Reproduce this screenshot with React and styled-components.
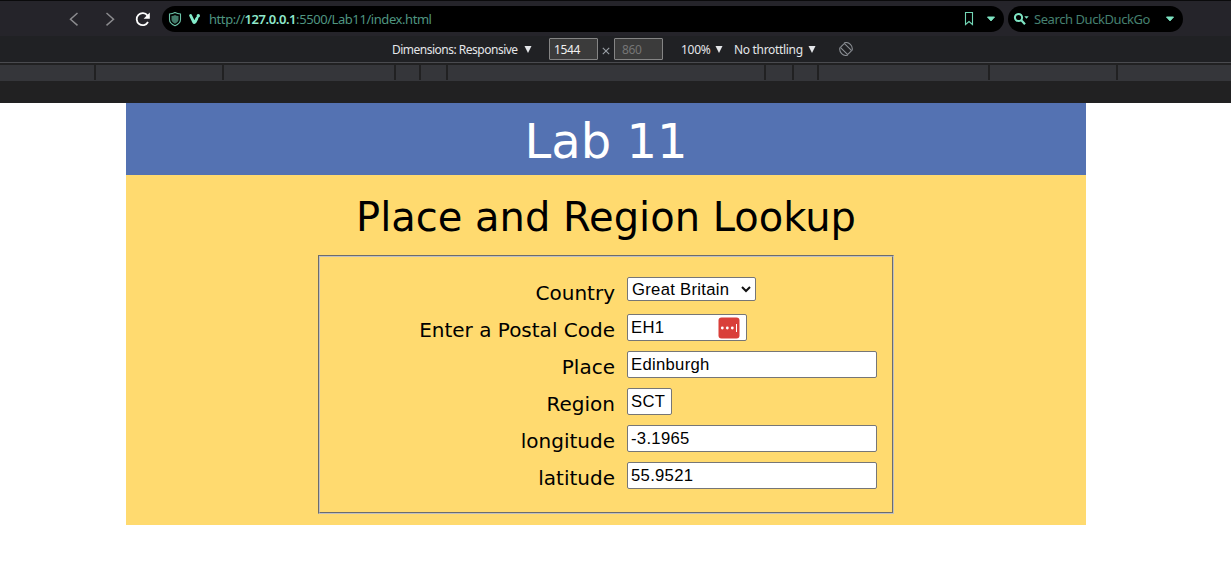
import React from "react";
import styled, { createGlobalStyle } from "styled-components";

const Global = createGlobalStyle`
  *, *::before, *::after { box-sizing: border-box; }
  body { margin: 0; background: #fff; }
  svg { flex-shrink: 0; }
`;

const Page = styled.div`
  width: 1231px;
  height: 587px;
  overflow: hidden;
  background: #fff;
`;

/* ---------- browser chrome ---------- */
const NavBar = styled.div`
  height: 36px;
  padding: 5px 0 4px 65px;
  border-top: 1px solid #0a0a0b;
  background: #25242a;
  display: flex;
  align-items: center;
  font-family: "Noto Sans", sans-serif;
  font-size: 13px;
  color: #4f9580;
`;
const NavIcons = styled.div`
  width: 97px;
  display: flex;
`;
const UrlField = styled.div`
  width: 842px;
  height: 26px;
  border-radius: 13px;
  background: #000;
  display: flex;
  align-items: center;
  padding: 0 8px 0 6px;
`;
const Url = styled.span`
  flex: 1;
  margin-left: 7px;
  line-height: 26px;
  white-space: nowrap;
  letter-spacing: -0.43px;
  b { font-weight: 600; color: #8fe8cb; }
`;
const SearchField = styled(UrlField)`
  width: 175px;
  margin-left: 4px;
  padding: 0 8px 0 5px;
`;
const SearchHint = styled(Url)`
  margin-left: 4px;
  color: #468170;
`;

const DeviceBar = styled.div`
  height: 27px;
  background: #202124;
  border-bottom: 1px solid #4a4b4f;
  display: flex;
  align-items: center;
  padding-left: 392px;
  font-family: "Noto Sans", sans-serif;
  font-size: 12px;
  color: #e4e6e9;
`;
const Choice = styled.span`
  width: ${(p) => p.$w}px;
  margin-left: ${(p) => p.$before || 0}px;
  margin-right: ${(p) => p.$gap}px;
  display: flex;
  align-items: center;
  justify-content: space-between;
  white-space: nowrap;
  letter-spacing: ${(p) => p.$track || "0"};
`;
const SizeBox = styled.span`
  width: 49px;
  height: 22px;
  border: 1px solid #858585;
  border-radius: 1px;
  background: #3b3b3b;
  line-height: 21px;
  letter-spacing: -0.4px;
  padding-left: ${(p) => (p.$muted ? 7 : 4)}px;
  color: ${(p) => (p.$muted ? "#757575" : "#f1f1f1")};
`;
const Times = styled.span`
  width: 16px;
  display: flex;
  justify-content: center;
  padding-top: 4px;
`;

const Ruler = styled.div`
  height: 40px;
  padding: 2px 0 22px;
  background: #212122;
`;
const RulerTrack = styled.div`
  height: 16px;
  display: flex;
  gap: 2px;
  border-bottom: 1px solid #35363a;
`;
const Segment = styled.div`
  flex: ${(p) => (p.$w ? `0 0 ${p.$w}px` : "1")};
  background: #35363a;
`;

/* ---------- page content ---------- */
const Content = styled.main`
  width: 960px;
  margin-left: 126px;
  font-family: Verdana, "DejaVu Sans", sans-serif;
  color: #000;
`;
const Banner = styled.header`
  height: 72px;
  background: #5472b2;
  color: #fff;
  text-align: center;
  font-size: 48px;
  line-height: 72px;
  padding-top: 2px;
`;
const Body = styled.section`
  height: 350px;
  background: #ffda6f;
  padding-top: 12px;
`;
const Title = styled.h1`
  margin: 0 0 8px;
  font-size: 40px;
  font-weight: 400;
  line-height: 60px;
  text-align: center;
  white-space: nowrap;
`;
const Form = styled.form`
  width: 576px;
  height: 259px;
  margin: 0 0 0 192px;
  border: 2px groove #c0c0c0;
  padding-top: 20px;
`;
const Row = styled.div`
  height: 37px;
  display: flex;
  align-items: flex-start;
`;
const Label = styled.label`
  width: 295px;
  margin-right: 12px;
  padding-top: 4px;
  font-size: 20px;
  line-height: 24px;
  text-align: right;
  white-space: nowrap;
`;
const Field = styled.div`
  width: ${(p) => p.$w}px;
  height: ${(p) => p.$h || 27}px;
  border: 1px solid #767676;
  border-radius: 2px;
  background: #fff;
  display: flex;
  align-items: center;
  justify-content: space-between;
  padding: 0 ${(p) => p.$right || 3}px 0 ${(p) => p.$left || 3}px;
  font-family: "Liberation Sans", Arial, sans-serif;
  font-size: 16.67px;
  line-height: 25px;
  letter-spacing: 0.3px;
  white-space: nowrap;
`;

const Caret = () => (
  <svg width="8" height="7" viewBox="0 0 8 7"><path d="M.5 0h7L4 7z" fill="#e4e6e9" /></svg>
);
const MintCaret = () => (
  <svg width="10" height="6" viewBox="0 0 10 6"><path d="M1.500 1h7L5 4.900z" fill="#7ee5c3" stroke="#7ee5c3" strokeLinejoin="round" /></svg>
);

const segments = [94, 126, 170, 23, 25, 316, 26, 23, 169, 126, 0];

export default function App() {
  return (
    <Page>
      <Global />
      <NavBar>
        <NavIcons>
          <svg width="97" height="26" viewBox="0 0 97 26" fill="none">
            <path d="M12.500 7l-7 6.200 7 6.200" stroke="#8b8b8e" strokeWidth="1.500" />
            <path d="M41.500 7l7 6.200-7 6.200" stroke="#8b8b8e" strokeWidth="1.500" />
            <path d="M82.500 9.600A6 6 0 1 0 83 16" stroke="#fff" strokeWidth="1.800" />
            <path d="M84.800 6.500v6.200h-6.200z" fill="#fff" />
          </svg>
        </NavIcons>
        <UrlField>
          <svg width="34" height="26" viewBox="0 0 34 26" fill="none">
            <path d="M1.500 8Q4.500 7.800 7 6.500q2.500 1.300 5.500 1.500v5.500q0 4-5.500 6.200-5.500-2.200-5.500-6.200z" stroke="#6cc4a8" strokeWidth="1.100" />
            <path d="M3.500 10Q5.500 9.600 7 8.900q1.500.7 3.500 1.100v3.600q0 2.500-3.500 4.100-3.500-1.600-3.500-4.100z" fill="#427a69" />
            <path d="M22.600 9.500L25.600 15.800Q26.300 17.300 27.200 15.800L28.800 12.600" stroke="#83ecca" strokeWidth="2.900" strokeLinecap="round" strokeLinejoin="round" />
            <circle cx="30.300" cy="9.700" r="1.700" fill="#83ecca" />
            <path d="M30.300 9.700l-2 4" stroke="#83ecca" strokeWidth="2" />
          </svg>
          <Url>http://<b>127.0.0.1</b>:5500/Lab11/index.html</Url>
          <svg width="26" height="26" viewBox="0 0 26 26" fill="none">
            <path d="M5.500 6.500h7v12L9 15.500l-3.500 3z" stroke="#72d6b5" strokeWidth="1.100" />
          </svg>
          <MintCaret />
        </UrlField>
        <SearchField>
          <svg width="17" height="26" viewBox="0 0 17 26" fill="none">
            <circle cx="5.500" cy="11.500" r="3.600" stroke="#7ee5c3" strokeWidth="2" />
            <path d="M8.300 14.300l3.700 4" stroke="#7ee5c3" strokeWidth="2.200" />
            <path d="M11.300 10.300h4.400l-2.200 2.500z" fill="#7ee5c3" />
          </svg>
          <SearchHint>Search DuckDuckGo</SearchHint>
          <MintCaret />
        </SearchField>
      </NavBar>

      <DeviceBar>
        <Choice $w={140} $gap={17} $track="-0.5px">Dimensions: Responsive<Caret /></Choice>
        <SizeBox>1544</SizeBox>
        <Times>
          <svg width="8" height="8" viewBox="0 0 8 8"><path d="M.8.8l6.400 6.400M7.200.8L.8 7.200" stroke="#9aa0a6" strokeWidth="1.100" /></svg>
        </Times>
        <SizeBox $muted>860</SizeBox>
        <Choice $w={42} $before={18} $gap={11} $track="-0.3px">100%<Caret /></Choice>
        <Choice $w={82} $gap={23} $track="-0.32px">No throttling<Caret /></Choice>
        <svg width="14" height="14" viewBox="0 0 14 14" fill="none" stroke="#898d92" strokeWidth="1.100">
          <rect x="4.200" y="1.900" width="5.600" height="10.200" rx=".6" transform="rotate(-45 7 7)" />
          <path d="M5 .9a6.300 6.300 0 0 1 8 7.800M9 13.100A6.300 6.300 0 0 1 1 5.300" />
        </svg>
      </DeviceBar>

      <Ruler>
        <RulerTrack>
          {segments.map((w, i) => <Segment key={i} $w={w} />)}
        </RulerTrack>
      </Ruler>

      <Content>
        <Banner>Lab 11</Banner>
        <Body>
          <Title>Place and Region Lookup</Title>
          <Form>
            <Row>
              <Label>Country</Label>
              <Field $w={129} $h={24} $left={4} $right={4}>
                Great Britain
                <svg width="10" height="7" viewBox="0 0 10 7" fill="none"><path d="M1 1l4 4 4-4" stroke="#111" strokeWidth="2" /></svg>
              </Field>
            </Row>
            <Row>
              <Label>Enter a Postal Code</Label>
              <Field $w={120} $right={6}>
                EH1
                <svg width="22" height="22" viewBox="0 0 22 22">
                  <rect x=".5" y=".5" width="21" height="21" rx="3" fill="#d93f3a" />
                  <circle cx="4.300" cy="11" r="1.400" fill="#fff" />
                  <circle cx="9.300" cy="11" r="1.400" fill="#fff" />
                  <circle cx="14.300" cy="11" r="1.400" fill="#fff" />
                  <path d="M18.500 7v8" stroke="#fff" />
                </svg>
              </Field>
            </Row>
            <Row><Label>Place</Label><Field $w={250}>Edinburgh</Field></Row>
            <Row><Label>Region</Label><Field $w={45}>SCT</Field></Row>
            <Row><Label>longitude</Label><Field $w={250}>-3.1965</Field></Row>
            <Row><Label>latitude</Label><Field $w={250}>55.9521</Field></Row>
          </Form>
        </Body>
      </Content>
    </Page>
  );
}
